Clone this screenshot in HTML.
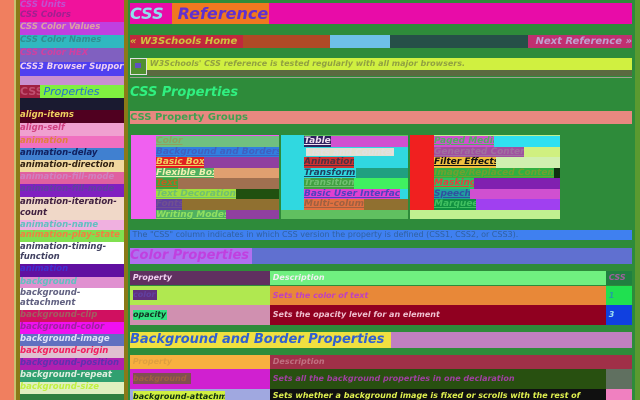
<!DOCTYPE html>
<html><head><meta charset="utf-8"><style>
*{margin:0;padding:0;box-sizing:border-box}
body{width:640px;height:400px;overflow:hidden;background:#2e8b3a;position:relative;font-family:"DejaVu Sans","Liberation Sans",sans-serif;font-weight:bold;font-style:italic}
.a{position:absolute;white-space:nowrap;overflow:hidden}
.s{font-size:8.5px;line-height:11px;padding-left:0}
.g{font-size:9px;line-height:10.5px;text-decoration:underline}
</style></head><body>
<div class="a" style="left:0;top:0;width:14px;height:400px;background:#f07f5f"></div>
<div class="a" style="left:14px;top:0;width:4px;height:400px;background:#c8c070"></div>
<div class="a" style="left:16px;top:0;width:4px;height:400px;background:#8a7a18"></div>
<div class="a" style="left:124px;top:0;width:4px;height:400px;background:#8a7a18"></div>
<div class="a" style="left:635px;top:0;width:5px;height:400px;background:#5a9a30"></div>

<div class="a s" style="left:20px;top:0;width:104px;height:10px;background:#f0129c;color:#c050d0">CSS Units</div>
<div class="a s" style="left:20px;top:10px;width:104px;height:12px;background:#f0129c;color:#a02090">CSS Colors</div>
<div class="a s" style="left:20px;top:22px;width:104px;height:13px;background:#c040e0;color:#e0a0a0">CSS Color Values</div>
<div class="a s" style="left:20px;top:35px;width:104px;height:13px;background:#30b8c0;color:#309090">CSS Color Names</div>
<div class="a s" style="left:20px;top:48px;width:104px;height:14px;background:#8060c0;color:#d040a0">CSS Color HEX</div>
<div class="a s" style="left:20px;top:62px;width:104px;height:14px;background:#5040f0;color:#f0d0f0">CSS3 Browser Support</div>
<div class="a" style="left:20px;top:76px;width:104px;height:9px;background:#c890d0"></div>
<div class="a" style="left:20px;top:85px;width:20px;height:13px;background:#a02040;color:#c05070;font-size:11px;line-height:13px;font-style:normal">CSS</div>
<div class="a" style="left:40px;top:85px;width:84px;height:13px;background:#80f040;color:#2070d0;font-size:11px;line-height:13px;font-weight:normal">&nbsp;Properties</div>
<div class="a" style="left:20px;top:98px;width:104px;height:12px;background:#1a1a30"></div>
<div class="a s" style="left:20px;top:110px;width:104px;height:13px;background:#500020;color:#f0d060">align-items</div>
<div class="a s" style="left:20px;top:123px;width:104px;height:13px;background:#f0a0d0;color:#d04080">align-self</div>
<div class="a s" style="left:20px;top:136px;width:104px;height:12px;background:#f070c0;color:#e08040">animation</div>
<div class="a s" style="left:20px;top:148px;width:104px;height:12px;background:#4080d0;color:#102060">animation-delay</div>
<div class="a s" style="left:20px;top:160px;width:104px;height:12px;background:#f0d8a0;color:#302010">animation-direction</div>
<div class="a s" style="left:20px;top:172px;width:104px;height:12px;background:#e060a0;color:#d080c0">animation-fill-mode</div>
<div class="a s" style="left:20px;top:184px;width:104px;height:13px;background:#8020c0;color:#6040a0">animation-fill-mode</div>
<div class="a s" style="left:20px;top:197px;width:104px;height:23px;background:#f0d8c8;color:#402040;white-space:normal;line-height:11px">animation-iteration-count</div>
<div class="a s" style="left:20px;top:220px;width:104px;height:10px;background:#f0b0e0;color:#60c0c0">animation-name</div>
<div class="a s" style="left:20px;top:230px;width:104px;height:12px;background:#80e050;color:#f08040">animation-play-state</div>
<div class="a s" style="left:20px;top:242px;width:104px;height:22px;background:#ffffff;color:#404060;white-space:normal;line-height:10px">animation-timing-function</div>
<div class="a s" style="left:20px;top:264px;width:104px;height:13px;background:#6010a0;color:#4030d0">animation</div>
<div class="a s" style="left:20px;top:277px;width:104px;height:11px;background:#e090d0;color:#60c0c0">background</div>
<div class="a s" style="left:20px;top:288px;width:104px;height:22px;background:#ffffff;color:#606080;white-space:normal;line-height:10px">background-attachment</div>
<div class="a s" style="left:20px;top:310px;width:104px;height:12px;background:#d01060;color:#a06060">background-clip</div>
<div class="a s" style="left:20px;top:322px;width:104px;height:12px;background:#f010f0;color:#a020a0">background-color</div>
<div class="a s" style="left:20px;top:334px;width:104px;height:12px;background:#6070c0;color:#e0e0f8">background-image</div>
<div class="a s" style="left:20px;top:346px;width:104px;height:12px;background:#e0c0d0;color:#f02060">background-origin</div>
<div class="a s" style="left:20px;top:358px;width:104px;height:12px;background:#b020b0;color:#6030b0">background-position</div>
<div class="a s" style="left:20px;top:370px;width:104px;height:12px;background:#30a070;color:#e0f0e0">background-repeat</div>
<div class="a s" style="left:20px;top:382px;width:104px;height:12px;background:#e0f0c0;color:#c0f040">background-size</div>
<div class="a" style="left:20px;top:394px;width:104px;height:6px;background:#308040"></div>

<div class="a" style="left:130px;top:3px;width:502px;height:21px;background:#e80ca8"></div>
<div class="a" style="left:130px;top:3px;height:21px;font-size:16px;line-height:21px;color:#90e0f0">CSS</div>
<div class="a" style="left:172px;top:3px;width:97px;height:21px;background:#f07820;color:#6030d0;font-size:16px;line-height:21px">&nbsp;Reference</div>

<div class="a" style="left:130px;top:35px;width:502px;height:13px;background:#265048"></div>
<div class="a" style="left:130px;top:35px;width:200px;height:13px;background:#b04a26"></div>
<div class="a" style="left:130px;top:35px;width:113px;height:13px;background:#c0283c;color:#d0c040;font-size:10px;line-height:13px">« W3Schools Home</div>
<div class="a" style="left:330px;top:35px;width:60px;height:13px;background:#6ec0e8"></div>
<div class="a" style="left:528px;top:35px;width:104px;height:13px;background:#c03070;color:#c0a0d0;font-size:10px;line-height:13px;text-align:right">Next Reference »</div>

<div class="a" style="left:130px;top:58px;width:17px;height:17px;background:#509030;border:1px solid #e0e0e0"></div>
<div class="a" style="left:135px;top:63px;width:6px;height:5px;background:#6050c0"></div>
<div class="a" style="left:147px;top:58px;width:485px;height:12px;background:#d0f040;color:#90a040;font-size:8px;line-height:12px">&nbsp;W3Schools' CSS reference is tested regularly with all major browsers.</div>
<div class="a" style="left:147px;top:70px;width:485px;height:6px;background:#5a6a40"></div>
<div class="a" style="left:130px;top:77px;width:502px;height:1px;background:#a0a090"></div>

<div class="a" style="left:130px;top:84px;font-size:13px;line-height:18px;color:#30f080">CSS Properties</div>
<div class="a" style="left:130px;top:111px;width:502px;height:13px;background:#e88880;color:#40a050;font-size:10px;line-height:13px;font-style:normal">CSS Property Groups</div>

<div class="a" style="left:131px;top:135px;width:148px;height:84px;background:#f060f0"></div>
<div class="a" style="left:281px;top:135px;width:127px;height:84px;background:#60c060"></div>
<div class="a" style="left:410px;top:135px;width:150px;height:84px;background:#c0f090"></div>
<div class="a" style="left:281px;top:135px;width:23px;height:75px;background:#30d8e0"></div>
<div class="a" style="left:410px;top:135px;width:24px;height:75px;background:#f02020"></div>

<div class="a g" style="left:156px;top:136px;width:123px;height:10.5px;background:#70c080;color:#90a060">Color</div>
<div class="a g" style="left:156px;top:146.5px;width:123px;height:10.5px;background:#3080e0;color:#4060c0">Background and Borders</div>
<div class="a" style="left:156px;top:157px;width:123px;height:10.5px;background:#9040a0"></div>
<div class="a g" style="left:156px;top:157px;width:48px;height:10.5px;background:#e02020;color:#f0d060">Basic Box</div>
<div class="a" style="left:156px;top:167.5px;width:123px;height:10.5px;background:#e0a070"></div>
<div class="a g" style="left:156px;top:167.5px;width:58px;height:10.5px;background:#50b060;color:#f0f0b0">Flexible Box</div>
<div class="a" style="left:156px;top:178px;width:123px;height:10.5px;background:#a07050"></div>
<div class="a g" style="left:156px;top:178px;width:22px;height:10.5px;background:#40a040;color:#c06020">Text</div>
<div class="a" style="left:156px;top:188.5px;width:123px;height:10.5px;background:#205010"></div>
<div class="a g" style="left:156px;top:188.5px;width:80px;height:10.5px;background:#a0e040;color:#70c070">Text Decoration</div>
<div class="a" style="left:156px;top:199px;width:123px;height:10.5px;background:#907030"></div>
<div class="a g" style="left:156px;top:199px;width:26px;height:10.5px;background:#6040a0;color:#705090">Fonts</div>
<div class="a" style="left:156px;top:209.5px;width:123px;height:9.5px;background:#9040a0"></div>
<div class="a g" style="left:156px;top:209.5px;width:70px;height:9.5px;background:#50b060;color:#90e060">Writing Modes</div>

<div class="a" style="left:304px;top:136px;width:104px;height:10.5px;background:#d050d0"></div>
<div class="a g" style="left:304px;top:136px;width:27px;height:10.5px;background:#302060;color:#f0e0f0">Table</div>
<div class="a" style="left:304px;top:146.5px;width:104px;height:10.5px;background:#30d8e0"></div>
<div class="a g" style="left:306px;top:147.5px;width:88px;height:8.5px;background:#e0e0d0;color:#e0e0e0">Lists and Counters</div>
<div class="a" style="left:304px;top:157px;width:104px;height:10.5px;background:#30d8e0"></div>
<div class="a g" style="left:304px;top:157px;width:50px;height:10.5px;background:#d03030;color:#503040">Animation</div>
<div class="a" style="left:304px;top:167.5px;width:104px;height:10.5px;background:#20a080"></div>
<div class="a g" style="left:304px;top:167.5px;width:52px;height:10.5px;background:#30d8e0;color:#204060">Transform</div>
<div class="a" style="left:304px;top:178px;width:104px;height:10.5px;background:#40f060"></div>
<div class="a g" style="left:304px;top:178px;width:50px;height:10.5px;background:#40a040;color:#70c070">Transitions</div>
<div class="a" style="left:304px;top:188.5px;width:104px;height:10.5px;background:#30d8e0"></div>
<div class="a g" style="left:304px;top:188.5px;width:96px;height:10.5px;background:#e040d0;color:#5040c0">Basic User Interface</div>
<div class="a" style="left:304px;top:199px;width:104px;height:10.5px;background:#907030"></div>
<div class="a g" style="left:304px;top:199px;width:60px;height:10.5px;background:#e07040;color:#a06040">Multi-column</div>

<div class="a" style="left:434px;top:136px;width:126px;height:10.5px;background:#30e0f0"></div>
<div class="a g" style="left:434px;top:136px;width:60px;height:10.5px;background:#d050d0;color:#50b060">Paged Media</div>
<div class="a" style="left:434px;top:146.5px;width:126px;height:10.5px;background:#d0f080"></div>
<div class="a g" style="left:434px;top:146.5px;width:90px;height:10.5px;background:#a050a0;color:#a070a0">Generated Content</div>
<div class="a" style="left:434px;top:157px;width:126px;height:10.5px;background:#d0f0b0"></div>
<div class="a g" style="left:434px;top:157px;width:62px;height:10.5px;background:#f0c040;color:#101010">Filter Effects</div>
<div class="a" style="left:434px;top:167.5px;width:126px;height:10.5px;background:#103010"></div>
<div class="a g" style="left:434px;top:167.5px;width:120px;height:10.5px;background:#30b040;color:#70a030">Image/Replaced Content</div>
<div class="a" style="left:434px;top:178px;width:126px;height:10.5px;background:#8020b0"></div>
<div class="a g" style="left:434px;top:178px;width:40px;height:10.5px;background:#30c060;color:#e04040">Masking</div>
<div class="a" style="left:434px;top:188.5px;width:126px;height:10.5px;background:#d050d0"></div>
<div class="a g" style="left:434px;top:188.5px;width:36px;height:10.5px;background:#20a0a0;color:#3050a0">Speech</div>
<div class="a" style="left:434px;top:199px;width:126px;height:10.5px;background:#a040f0"></div>
<div class="a g" style="left:434px;top:199px;width:42px;height:10.5px;background:#109040;color:#40c060">Marquee</div>

<div class="a" style="left:130px;top:230px;width:502px;height:10px;background:#3f80f0;color:#3060a0;font-size:8px;line-height:10px;font-style:normal;font-weight:normal">&nbsp;The "CSS" column indicates in which CSS version the property is defined (CSS1, CSS2, or CSS3).</div>

<div class="a" style="left:130px;top:248px;width:502px;height:16px;background:#6070d0"></div>
<div class="a" style="left:130px;top:248px;width:122px;height:16px;background:#b070f0;color:#c040e0;font-size:13px;line-height:16px">Color Properties</div>

<div class="a" style="left:130px;top:271px;width:140px;height:14px;background:#603060;color:#f0d0f0;font-size:8px;line-height:14px">&nbsp;Property</div>
<div class="a" style="left:270px;top:271px;width:336px;height:14px;background:#70f080;color:#f0f0f0;font-size:8px;line-height:14px">&nbsp;Description</div>
<div class="a" style="left:606px;top:271px;width:26px;height:14px;background:#208040;color:#a060a0;font-size:8px;line-height:14px">&nbsp;CSS</div>
<div class="a" style="left:130px;top:286px;width:140px;height:19px;background:#b0e850"></div>
<div class="a" style="left:133px;top:290px;width:24px;height:10px;background:#603080;color:#6040a0;font-size:8px;line-height:10px">color</div>
<div class="a" style="left:270px;top:286px;width:336px;height:19px;background:#e88838;color:#c040c0;font-size:8px;line-height:19px">&nbsp;Sets the color of text</div>
<div class="a" style="left:606px;top:286px;width:26px;height:19px;background:#20e050;color:#20a0a0;font-size:8px;line-height:19px">&nbsp;1</div>
<div class="a" style="left:130px;top:305px;width:140px;height:20px;background:#d090b0"></div>
<div class="a" style="left:133px;top:310px;width:34px;height:10px;background:#30e080;color:#103020;font-size:8px;line-height:10px">opacity</div>
<div class="a" style="left:270px;top:305px;width:336px;height:20px;background:#900020;color:#f0c0d0;font-size:8px;line-height:20px">&nbsp;Sets the opacity level for an element</div>
<div class="a" style="left:606px;top:305px;width:26px;height:20px;background:#1040e0;color:#a0e0f0;font-size:8px;line-height:20px">&nbsp;3</div>

<div class="a" style="left:130px;top:332px;width:502px;height:16px;background:#c080c0"></div>
<div class="a" style="left:130px;top:332px;width:261px;height:16px;background:#f0e040;color:#3060d0;font-size:13px;line-height:16px">Background and Border Properties</div>

<div class="a" style="left:130px;top:355px;width:140px;height:14px;background:#f8b040;color:#e0a040;font-size:8px;line-height:14px">&nbsp;Property</div>
<div class="a" style="left:270px;top:355px;width:362px;height:14px;background:#a03048;color:#c07080;font-size:8px;line-height:14px">&nbsp;Description</div>
<div class="a" style="left:130px;top:369px;width:140px;height:20px;background:#d020d0"></div>
<div class="a" style="left:133px;top:373px;width:58px;height:11px;background:#805050;color:#a06040;font-size:8px;line-height:11px">background</div>
<div class="a" style="left:270px;top:369px;width:336px;height:20px;background:#285010;color:#a040a0;font-size:8px;line-height:20px">&nbsp;Sets all the background properties in one declaration</div>
<div class="a" style="left:606px;top:369px;width:26px;height:20px;background:#607060"></div>
<div class="a" style="left:130px;top:389px;width:140px;height:11px;background:#a0a8e0"></div>
<div class="a" style="left:133px;top:391px;width:92px;height:9px;background:#d0f040;color:#103010;font-size:8px;line-height:11px">background-attachment</div>
<div class="a" style="left:270px;top:389px;width:336px;height:11px;background:#101010;color:#e0f050;font-size:8px;line-height:13px">&nbsp;Sets whether a background image is fixed or scrolls with the rest of</div>
<div class="a" style="left:606px;top:389px;width:26px;height:11px;background:#f080c0"></div>
</body></html>
